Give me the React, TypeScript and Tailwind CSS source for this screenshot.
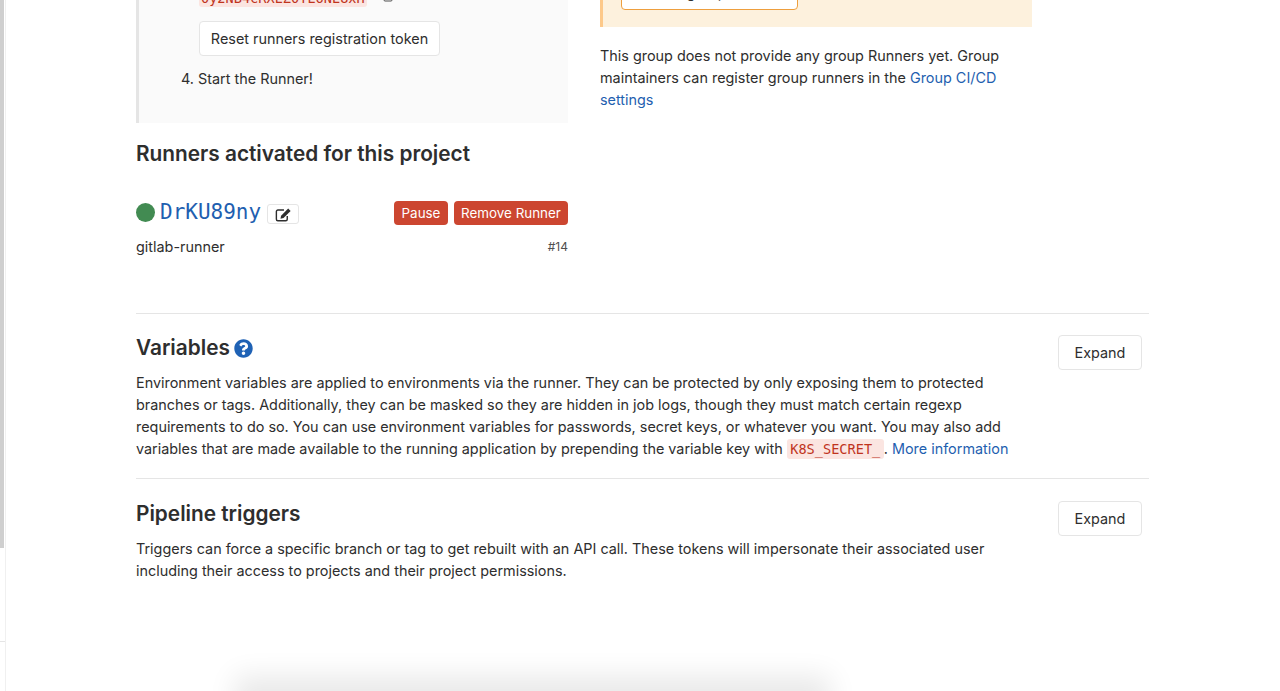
import { FaQuestionCircle } from "react-icons/fa";
import { Clipboard } from "lucide-react";

function ExpandButton() {
  return (
    <button className="flex h-[35px] w-[84px] shrink-0 items-center justify-center rounded-[4px] border border-[#e5e5e5] bg-white text-[14.4px] text-[#2e2e2e]">
      Expand
    </button>
  );
}

function EditIcon() {
  return (
    <svg viewBox="0 0 18 16" className="h-[15px] w-[17px] text-[#2e2e2e]" fill="none">
      <path
        d="M13 9.5V13a1.6 1.6 0 0 1-1.6 1.6H3A1.6 1.6 0 0 1 1.4 13V4.8A1.6 1.6 0 0 1 3 3.2h6.5"
        stroke="currentColor"
        strokeWidth="1.5"
      />
      <path d="M14 1.6l2.6 2.6-7.6 7.6-3.2.6.6-3.2z" fill="currentColor" />
    </svg>
  );
}

export default function App() {
  return (
    <div className="relative flex h-[691px] w-[1280px] overflow-hidden bg-white font-['Inter',sans-serif] text-[14.4px] leading-[22px] text-[#2e2e2e]">
      {/* Left: collapsed sidebar edge */}
      <div className="flex h-full w-[6px] shrink-0 flex-col border-r border-[#f0f0f0]">
        <div className="h-[548px] w-[4px] bg-[#cfcfcf]" />
        <div className="mt-[93px] h-px w-full bg-[#e5e5e5]" />
      </div>

      <div className="ml-[130px] w-[1013px]">
        {/* Runners columns */}
        <div className="-mt-[20px] flex gap-[32px]">
          <div className="w-[432px]">
            <div className="h-[143px] border-l-[3px] border-[#e5e5e5] bg-[#fafafa] pl-[60px] pt-[9px]">
              <div className="flex items-center gap-[15px]">
                <code className="rounded-[3px] bg-[#fbe5e1] px-[2px] font-['DejaVu_Sans_Mono',monospace] text-[13.6px] leading-[18px] text-[#c0341d]">
                  0y2NB4cRXEZ0TE6NE8xH
                </code>
                <Clipboard className="-mt-[4px] h-[14px] w-[12px] text-[#4f4f4f]" />
              </div>
              <button className="mt-[14px] flex h-[35px] w-[241px] items-center justify-center rounded-[4px] border border-[#e5e5e5] bg-white text-[14.4px] text-[#2e2e2e]">
                Reset runners registration token
              </button>
              <p className="-ml-[18px] mt-[12px]">4. Start the Runner!</p>
            </div>

            <h3 className="mt-[17px] text-[20.8px] font-semibold leading-[28px]">
              Runners activated for this project
            </h3>

            <div className="mt-[31px] flex items-center justify-between">
              <div className="flex items-center">
                <span className="mb-[2px] h-[19px] w-[19px] rounded-full bg-[#428b52]" />
                <a className="mb-[2px] ml-[5px] font-['DejaVu_Sans_Mono',monospace] text-[21px] leading-[26px] text-[#1f5fb0]">
                  DrKU89ny
                </a>
                <span className="ml-[6px] mt-[2px] flex h-[20px] w-[32px] items-center justify-center rounded-[3px] border border-[#e5e5e5] bg-white">
                  <EditIcon />
                </span>
              </div>
              <div className="flex gap-[6px]">
                <button className="flex h-[24px] w-[54px] items-center justify-center rounded-[4px] bg-[#cc4630] text-[13.4px] text-white">
                  Pause
                </button>
                <button className="flex h-[24px] w-[114px] items-center justify-center rounded-[4px] bg-[#cc4630] text-[13.4px] text-white">
                  Remove Runner
                </button>
              </div>
            </div>
            <div className="mt-[9px] flex items-center justify-between">
              <span>gitlab-runner</span>
              <span className="text-[12px] text-[#4f4f4f]">#14</span>
            </div>
          </div>

          <div className="w-[432px]">
            <div className="h-[47px] border-l-[3px] border-[#fdc98a] bg-[#fdf1dd] pl-[18px]">
              <button className="flex h-[30px] w-[177px] justify-center rounded-[4px] border border-[#ee9f3e] bg-white pt-[1px] text-[14.4px] text-[#2e2e2e]">
                Disable group Runners
              </button>
            </div>
            <p className="mt-[18px]">
              This group does not provide any group Runners yet. Group maintainers can register group runners in the{" "}
              <a className="text-[#1f5fb0]">Group CI/CD settings</a>
            </p>
          </div>
        </div>

        {/* Variables */}
        <section className="mt-[55px] flex justify-between border-t border-[#e5e5e5] pr-[7px] pt-[21px]">
          <div className="-mt-[1px] w-[880px]">
            <h4 className="flex items-center gap-[4px] text-[20.8px] font-semibold leading-[28px]">
              Variables
              <FaQuestionCircle className="text-[19px] text-[#1f62b5]" />
            </h4>
            <p className="mt-[10px]">
              Environment variables are applied to environments via the runner. They can be protected by only exposing
              them to protected branches or tags. Additionally, they can be masked so they are hidden in job logs, though
              they must match certain regexp requirements to do so. You can use environment variables for passwords,
              secret keys, or whatever you want. You may also add variables that are made available to the running
              application by prepending the variable key with{" "}
              <code className="rounded-[3px] bg-[#fbe5e1] px-[3.5px] py-[2px] font-['DejaVu_Sans_Mono',monospace] text-[13.6px] leading-none text-[#c0341d]">
                K8S_SECRET_
              </code>
              . <a className="text-[#1f5fb0]">More information</a>
            </p>
          </div>
          <ExpandButton />
        </section>

        {/* Pipeline triggers */}
        <section className="mt-[18px] flex justify-between border-t border-[#e5e5e5] pr-[7px] pt-[22px]">
          <div className="-mt-[1px] w-[880px]">
            <h4 className="text-[20.8px] font-semibold leading-[28px]">Pipeline triggers</h4>
            <p className="mt-[10px]">
              Triggers can force a specific branch or tag to get rebuilt with an API call. These tokens will impersonate
              their associated user including their access to projects and their project permissions.
            </p>
          </div>
          <ExpandButton />
        </section>
      </div>

      {/* Shadow of the dialog below the fold */}
      <div className="absolute left-[255px] top-[696px] h-[40px] w-[555px] shadow-[0_0_28px_20px_rgba(0,0,0,0.09)]" />
    </div>
  );
}
